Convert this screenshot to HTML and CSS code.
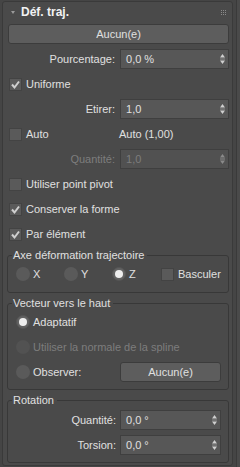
FILE: index.html
```html
<!DOCTYPE html>
<html lang="fr">
  <head>
    <meta charset="UTF-8" />
    <meta name="viewport" content="width=device-width, initial-scale=1.0" />
    <title>Déf. traj.</title>
    <link rel="stylesheet" href="styles.css">
  </head>
  <body>
    <div class="page">
      <div class="rollout">
        <!-- En-tête du panneau -->
        <div class="rollout-head">
          <span class="caret"></span>
          <span class="rollout-title">Déf. traj.</span>
          <svg class="grip" width="5" height="5" viewBox="0 0 5 5">
            <rect x="0" y="0" width="1" height="1" /><rect x="2" y="0" width="1" height="1" /><rect x="4" y="0" width="1" height="1" />
            <rect x="0" y="2" width="1" height="1" /><rect x="2" y="2" width="1" height="1" /><rect x="4" y="2" width="1" height="1" />
            <rect x="0" y="4" width="1" height="1" /><rect x="2" y="4" width="1" height="1" /><rect x="4" y="4" width="1" height="1" />
          </svg>
        </div>

        <div class="rollout-body">
          <button class="btn btn-wide">Aucun(e)</button>

          <div class="row">
            <span class="row-label">Pourcentage:</span>
            <div class="spinner">
              <span>0,0 %</span>
              <svg class="arrows" width="5" height="10" viewBox="0 0 5 10"><polygon points="2.5,0 5,3.5 0,3.5" /><rect x="0" y="4.5" width="5" height="1" class="bar" /><polygon points="0,6.5 5,6.5 2.5,10" /></svg>
            </div>
          </div>

          <div class="check-row">
            <span class="check on"><svg width="11" height="11" viewBox="0 0 11 11"><polyline points="2,5.5 4.5,8.5 9,2.5" /></svg></span>
            <span>Uniforme</span>
          </div>

          <div class="row">
            <span class="row-label">Etirer:</span>
            <div class="spinner">
              <span>1,0</span>
              <svg class="arrows" width="5" height="10" viewBox="0 0 5 10"><polygon points="2.5,0 5,3.5 0,3.5" /><rect x="0" y="4.5" width="5" height="1" class="bar" /><polygon points="0,6.5 5,6.5 2.5,10" /></svg>
            </div>
          </div>

          <div class="row">
            <div class="check-row">
              <span class="check"></span>
              <span>Auto</span>
            </div>
            <span class="row-value">Auto (1,00)</span>
          </div>

          <div class="row disabled">
            <span class="row-label">Quantité:</span>
            <div class="spinner">
              <span>1,0</span>
              <svg class="arrows" width="5" height="10" viewBox="0 0 5 10"><polygon points="2.5,0 5,3.5 0,3.5" /><rect x="0" y="4.5" width="5" height="1" class="bar" /><polygon points="0,6.5 5,6.5 2.5,10" /></svg>
            </div>
          </div>

          <div class="check-row">
            <span class="check"></span>
            <span>Utiliser point pivot</span>
          </div>

          <div class="check-row">
            <span class="check on"><svg width="11" height="11" viewBox="0 0 11 11"><polyline points="2,5.5 4.5,8.5 9,2.5" /></svg></span>
            <span>Conserver la forme</span>
          </div>

          <div class="check-row">
            <span class="check on"><svg width="11" height="11" viewBox="0 0 11 11"><polyline points="2,5.5 4.5,8.5 9,2.5" /></svg></span>
            <span>Par élément</span>
          </div>

          <!-- Axe -->
          <fieldset class="group group-axis">
            <legend>Axe déformation trajectoire</legend>
            <div class="axis-row">
              <div class="radio-row"><span class="radio"></span><span>X</span></div>
              <div class="radio-row"><span class="radio"></span><span>Y</span></div>
              <div class="radio-row"><span class="radio on"></span><span>Z</span></div>
              <div class="check-row"><span class="check"></span><span>Basculer</span></div>
            </div>
          </fieldset>

          <!-- Vecteur -->
          <fieldset class="group">
            <legend>Vecteur vers le haut</legend>
            <div class="radio-row"><span class="radio on"></span><span>Adaptatif</span></div>
            <div class="radio-row disabled"><span class="radio"></span><span>Utiliser la normale de la spline</span></div>
            <div class="row">
              <div class="radio-row"><span class="radio"></span><span>Observer:</span></div>
              <button class="btn">Aucun(e)</button>
            </div>
          </fieldset>

          <!-- Rotation -->
          <fieldset class="group group-last">
            <legend>Rotation</legend>
            <div class="row">
              <span class="row-label">Quantité:</span>
              <div class="spinner">
                <span>0,0 °</span>
                <svg class="arrows" width="5" height="10" viewBox="0 0 5 10"><polygon points="2.5,0 5,3.5 0,3.5" /><rect x="0" y="4.5" width="5" height="1" class="bar" /><polygon points="0,6.5 5,6.5 2.5,10" /></svg>
              </div>
            </div>
            <div class="row">
              <span class="row-label">Torsion:</span>
              <div class="spinner">
                <span>0,0 °</span>
                <svg class="arrows" width="5" height="10" viewBox="0 0 5 10"><polygon points="2.5,0 5,3.5 0,3.5" /><rect x="0" y="4.5" width="5" height="1" class="bar" /><polygon points="0,6.5 5,6.5 2.5,10" /></svg>
              </div>
            </div>
          </fieldset>
        </div>
      </div>
      <div class="scrollbar"></div>
    </div>
  </body>
</html>
```

FILE: styles.css
```css
body {
  margin: 0;
  background-color: #454545;
  color: #e0e0e0;
  font-family: "Liberation Sans", Arial, sans-serif;
  font-size: 11px;
}
.page {
  display: flex;
  height: 467px;
  padding: 1px 0 0 2px;
  box-sizing: border-box;
}
.rollout {
  width: 232px;
  height: 465px;
  box-sizing: border-box;
  background-color: #4a4a4a;
  border: 1px solid #3a3a3a;
  border-radius: 3px;
}
.scrollbar {
  width: 3px;
  margin-left: 3px;
  height: 467px;
  margin-top: -1px;
  background-color: #4a4a4a;
  border-left: 1px solid #3a3a3a;
}

.rollout-head {
  display: flex;
  align-items: center;
  height: 20px;
  padding: 0 6px 0 8px;
}
.caret {
  width: 0;
  height: 0;
  border-left: 2.5px solid transparent;
  border-right: 2.5px solid transparent;
  border-top: 3px solid #9a9a9a;
  margin-right: 6px;
}
.rollout-title {
  font-weight: bold;
  font-size: 12px;
  color: #f2f2f2;
  flex: 1;
}
.grip {
  fill: #8a8a8a;
}

.rollout-body {
  display: flex;
  flex-direction: column;
  gap: 5px;
  padding: 2px 3px 0 4px;
}

.btn {
  height: 20px;
  padding: 0;
  background-color: #5d5d5d;
  color: #e0e0e0;
  border: 1px solid #3c3c3c;
  border-radius: 3px;
  font-family: inherit;
  font-size: 11px;
}
.btn-wide {
  margin-left: 1px;
}

.row {
  display: grid;
  grid-template-columns: 1fr 109px;
  column-gap: 5px;
  align-items: center;
  height: 20px;
}
.row-label {
  text-align: right;
}
.row-value {
  margin-left: -1px;
}
.spinner {
  display: flex;
  align-items: center;
  justify-content: space-between;
  height: 20px;
  box-sizing: border-box;
  padding: 0 3px 0 5px;
  background-color: #575757;
  border: 1px solid #3f3f3f;
}
.arrows polygon {
  fill: #cfcfcf;
}
.arrows .bar {
  fill: #8c8c8c;
}
.disabled {
  color: #7d7d7d;
}
.disabled .spinner {
  background-color: #515151;
}
.disabled .arrows polygon {
  fill: #8a8a8a;
}

.check-row,
.radio-row {
  display: flex;
  align-items: center;
  height: 20px;
}
.check {
  display: flex;
  align-items: center;
  justify-content: center;
  width: 13px;
  height: 13px;
  box-sizing: border-box;
  margin: 0 4px 0 2px;
  background-color: #5a5a5a;
  border: 1px solid #434343;
}
.check polyline {
  fill: none;
  stroke: #cfcfcf;
  stroke-width: 2;
}
.radio {
  width: 14px;
  height: 14px;
  box-sizing: border-box;
  margin-right: 3px;
  border-radius: 50%;
  background-color: #5a5a5a;
  position: relative;
}
.radio.on {
  background-color: #626262;
  border: 1px solid #555;
}
.radio.on::after {
  content: "";
  position: absolute;
  left: 2px;
  top: 2px;
  width: 8px;
  height: 8px;
  border-radius: 50%;
  background-color: #eeeeee;
}
.radio-row.disabled .radio {
  background-color: #525252;
}

.group {
  margin: -2px 0 0;
  padding: 2px 7px 7px 8px;
  min-width: 0;
  border: 1px solid #383838;
  border-radius: 3px;
  display: flex;
  flex-direction: column;
  gap: 5px;
}
.group legend {
  margin-left: -4px;
  padding: 0 3px 0 1px;
  line-height: 14px;
}
.group-axis {
  margin-top: -1px;
  padding-bottom: 8px;
}
.group .row {
  grid-template-columns: 1fr 101px;
}
.group .row-label {
  margin-right: -1px;
}
.group .btn {
  width: 101px;
}
.axis-row {
  display: grid;
  grid-template-columns: 48px 48px 48px 1fr;
}
.axis-row .check {
  margin-left: 1px;
}
.group-last {
  padding-top: 3px;
}
```
